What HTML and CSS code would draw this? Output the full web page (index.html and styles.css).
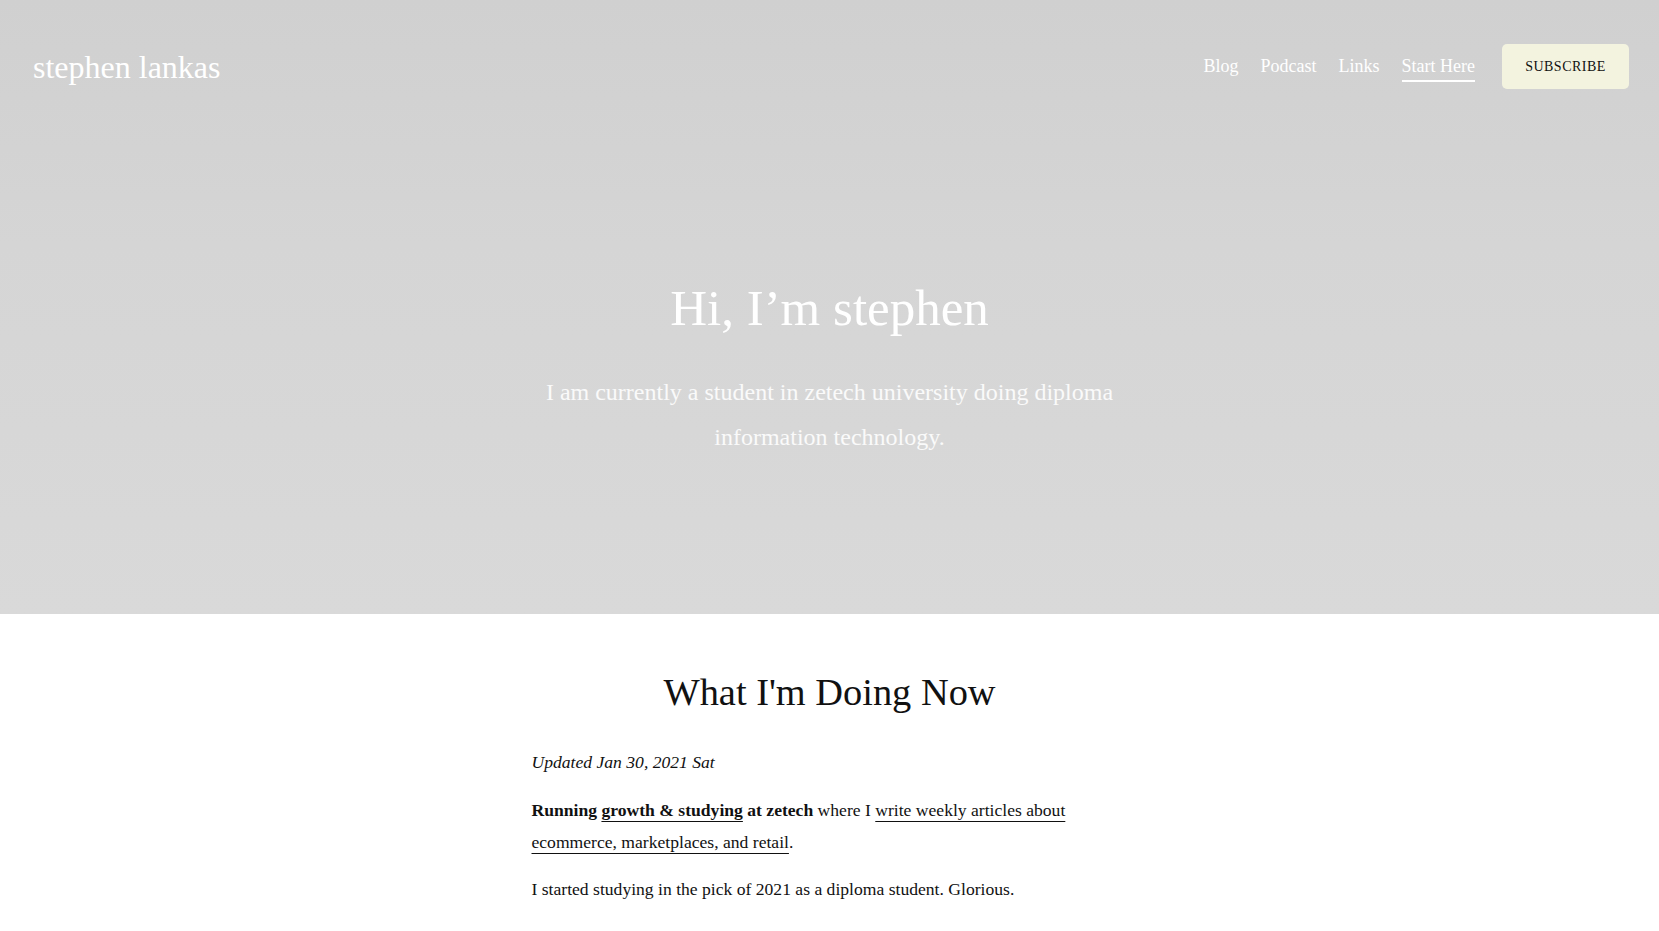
FILE: index.html
```html
<!DOCTYPE html>
<html lang="en">
<head>
<meta charset="utf-8">
<title>stephen lankas</title>
<link rel="stylesheet" href="styles.css">
</head>
<body>
<section class="hero">
  <header class="site-header">
    <a class="logo" href="#">stephen lankas</a>
    <nav class="nav">
      <a class="nav-link" href="#">Blog</a>
      <a class="nav-link" href="#">Podcast</a>
      <a class="nav-link" href="#">Links</a>
      <a class="nav-link nav-link--active" href="#">Start Here</a>
      <a class="subscribe" href="#">Subscribe</a>
    </nav>
  </header>
  <div class="hero-body">
    <h1 class="hero-title">Hi, I’m stephen</h1>
    <p class="hero-sub">I am currently a student in zetech university doing diploma information technology.</p>
  </div>
</section>
<main class="content">
  <h2 class="content-title">What I'm Doing Now</h2>
  <p class="updated">Updated Jan 30, 2021 Sat</p>
  <p class="para"><b class="strong">Running </b><a class="ulink strong" href="#">growth &amp; studying</a><b class="strong"> at zetech</b> where I <a class="ulink" href="#">write weekly articles about ecommerce, marketplaces, and retail</a>.</p>
  <p class="para">I started studying in the pick of 2021 as a diploma student. Glorious.</p>
</main>
</body>
</html>
```

FILE: styles.css
```css
* { box-sizing: border-box; }
html, body { margin: 0; padding: 0; }
body {
  font-family: "Liberation Serif", "Times New Roman", serif;
  color: #111;
  background: #fff;
}
a { color: inherit; text-decoration: none; }

.hero {
  background: linear-gradient(180deg, #d0d0d0 0%, #d5d5d5 40%, #d9d9d9 100%);
  height: 614px;
  color: #fff;
}

.site-header {
  display: flex;
  align-items: center;
  justify-content: space-between;
  padding: 44px 30px 0 33px;
  height: 89px;
}
.logo {
  font-size: 32px;
  line-height: 1.15;
  color: #fff;
  margin-top: 2px;
}
.nav {
  display: flex;
  align-items: center;
  gap: 22px;
}
.nav-link {
  font-size: 18px;
  line-height: 1.15;
  color: #fff;
  padding-top: 5px;
  padding-bottom: 4px;
  border-bottom: 2px solid transparent;
}
.nav-link--active { border-bottom-color: #fff; }
.subscribe {
  margin-left: 5px;
  display: flex;
  align-items: center;
  justify-content: center;
  width: 127px;
  height: 45px;
  background: #f3f3df;
  border-radius: 5px;
  color: #111;
  font-size: 14px;
  letter-spacing: 0.5px;
  text-transform: uppercase;
}

.hero-body {
  display: flex;
  flex-direction: column;
  align-items: center;
  padding-top: 190px;
  text-align: center;
}
.hero-title {
  margin: 0;
  font-size: 51px;
  font-weight: normal;
  line-height: 1.15;
  color: #fff;
}
.hero-sub {
  margin: 32px 0 0;
  max-width: 600px;
  font-size: 24px;
  line-height: 45px;
  color: #fafafa;
}

.content {
  width: 596px;
  margin: 0 auto;
  padding-top: 56px;
}
.content-title {
  margin: 0 0 32px;
  text-align: center;
  font-size: 38.4px;
  font-weight: normal;
  line-height: 1.15;
  color: #111;
}
.updated {
  margin: 0 0 16px;
  font-style: italic;
  font-size: 17.6px;
  line-height: 32px;
}
.para {
  margin: 0 0 15px;
  font-size: 17.6px;
  line-height: 32px;
}
.strong { font-weight: bold; }
.ulink {
  text-decoration: underline;
  text-decoration-thickness: 1px;
  text-underline-offset: 5px;
}
```
